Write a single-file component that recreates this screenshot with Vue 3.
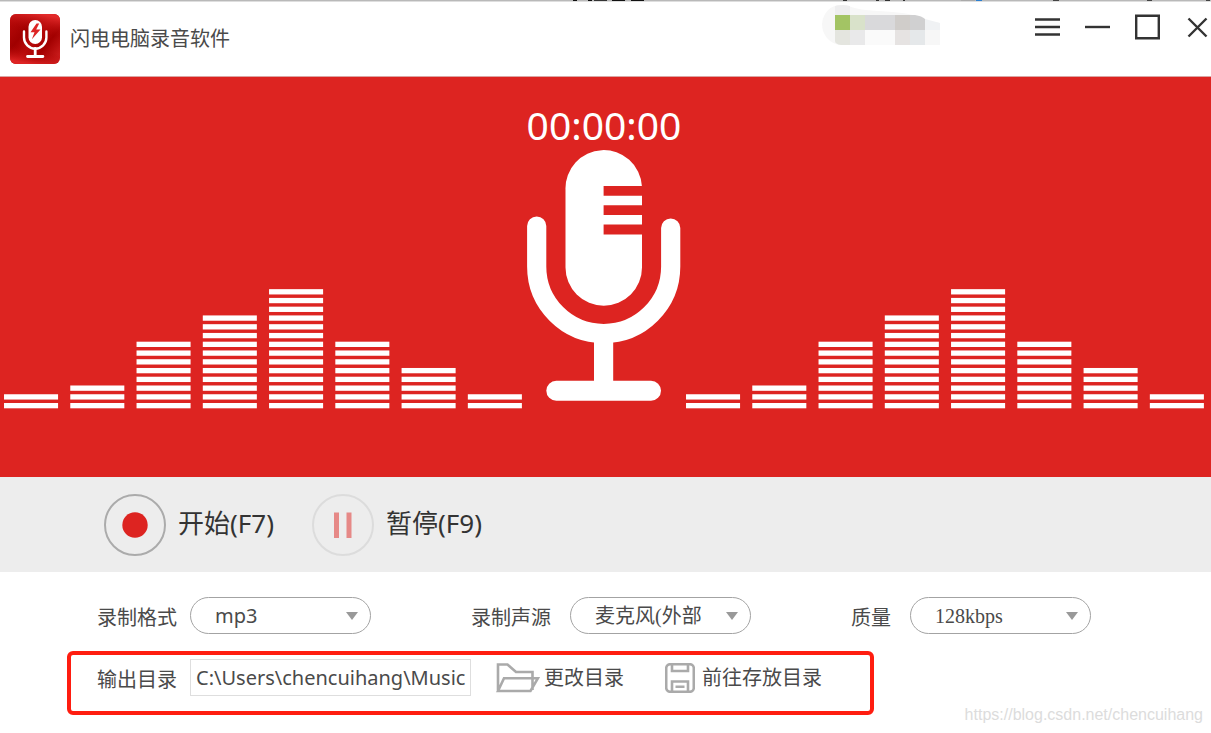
<script setup>
import { ref } from 'vue'

const format = ref('mp3')
const source = ref('mic')
const quality = ref('128')
const folder = ref('C:\\Users\\chencuihang\\Music')

const levels = [2, 3, 8, 11, 14, 8, 5, 2]
const stripes = levels.flatMap((count, col) =>
  Array.from({ length: count }, (_, row) => ({
    id: `${col}-${row}`,
    x: col * 66.2,
    y: 113.9 - row * 8.75
  }))
)

const sliver = [
  [573, 4, '#111'], [588, 4, '#111'], [594, 13, '#333'], [612, 13, '#111'], [631, 13, '#111'],
  [843, 4, '#333'], [876, 3, '#333'], [885, 5, '#333'], [903, 2, '#333'], [961, 14, '#aaa'],
  [976, 6, '#2b7fd0'], [1053, 6, '#444'], [1147, 5, '#444'], [1206, 4, '#444']
]
</script>

<template>
  <div class="app">
    <svg class="sliver" height="2" aria-hidden="true">
      <rect width="100%" height="1" fill="#b9b9b9" />
      <rect y="1" width="100%" height="1" fill="#dedede" />
      <rect v-for="s in sliver" :key="s[0]" :x="s[0]" :width="s[1]" height="1" :fill="s[2]" />
    </svg>

    <header class="titlebar">
      <svg class="logo" viewBox="0 0 50 50" aria-hidden="true">
        <defs>
          <linearGradient id="logoFill" x1="0" y1="0.1" x2="1" y2="0.9">
            <stop offset="0" stop-color="#b80a0a" />
            <stop offset="0.3" stop-color="#a00000" />
            <stop offset="0.5" stop-color="#b80a0a" />
            <stop offset="0.7" stop-color="#a20000" />
            <stop offset="1" stop-color="#d02020" />
          </linearGradient>
          <linearGradient id="logoShine" x1="0.6" y1="0" x2="0.4" y2="1">
            <stop offset="0" stop-color="#e22a2a" />
            <stop offset="0.4" stop-color="#a80000" stop-opacity="0" />
            <stop offset="0.7" stop-color="#a80000" stop-opacity="0" />
            <stop offset="1" stop-color="#de2424" />
          </linearGradient>
        </defs>
        <rect width="50" height="50" rx="6" fill="url(#logoFill)" />
        <rect width="50" height="50" rx="6" fill="url(#logoShine)" />
        <rect x="18.500" y="6" width="13.500" height="24" rx="6.700" fill="#fff" />
        <path d="M26.500 9.500 20.500 18.200h4l-2.600 7 8.600-9.700h-4.300l3-6z" fill="#dd2424" />
        <path d="M14 17.500v6a11.200 11.200 0 0 0 22.400 0v-6" fill="none" stroke="#fff" stroke-width="2.400" stroke-linecap="round" />
        <path d="M25.200 34.500v7.500M17.500 42.500h15.400" fill="none" stroke="#fff" stroke-width="2.800" stroke-linecap="round" />
      </svg>
      <h1 class="title">闪电电脑录音软件</h1>

      <svg class="account" viewBox="0 0 118 46" aria-hidden="true">
        <path d="M0 19C1 8 8 0 19 0c8 0 13 4 25 5 22 2 43 2 56 8 6 3 12 4 18 5v22H18C8 39 0 30 0 19z" fill="#f7f7f7" />
        <path d="M13 1q8-2 15 0v9H13z" fill="#eeeeef" />
        <path d="M13 10h15v15H13z" fill="#a3c464" />
        <path d="M28 10h15v15H28z" fill="#d9e2ca" />
        <path d="M43 10h30v15H43z" fill="#d9d9db" />
        <path d="M73 10h15v15H73z" fill="#d0cdca" />
        <path d="M88 10h5q7 1 10 4v11H88z" fill="#d0d0d1" />
        <path d="M103 14l15 4v7h-15z" fill="#f0f2f4" />
        <path d="M13 25h15v15h-9q-6-1-6-4z" fill="#e4e5df" />
        <path d="M28 25h15v15H28z" fill="#e9e9ea" />
        <path d="M43 25h30v15H43z" fill="#fafafa" />
        <path d="M73 25h15v15H73z" fill="#e6e3e2" />
        <path d="M88 25h15v15H88z" fill="#e5e8ea" />
      </svg>

      <nav class="window-buttons">
        <button type="button" aria-label="菜单">
          <svg viewBox="0 0 26 26"><path d="M0 5.500h25M0 13h25M0 20.500h25" /></svg>
        </button>
        <button type="button" aria-label="最小化">
          <svg viewBox="0 0 26 26"><path d="M0 13h25" /></svg>
        </button>
        <button type="button" aria-label="最大化">
          <svg viewBox="0 0 26 26"><path d="M1.200 1.700h22.600v22.600H1.200z" /></svg>
        </button>
        <button type="button" aria-label="关闭">
          <svg viewBox="0 0 26 26"><path d="M3.500 4.500l18 18M21.500 4.500l-18 18" /></svg>
        </button>
      </nav>
    </header>

    <main>
      <section class="stage">
        <div class="timer">00:00:00</div>
        <div class="scene">
          <svg class="wave" viewBox="0 0 518 120" aria-hidden="true">
            <rect v-for="s in stripes" :key="s.id" :x="s.x" :y="s.y" width="54" height="5.300" />
          </svg>
          <svg class="mic" viewBox="1 0 153 258" aria-hidden="true">
            <path d="M38.500 38.800a38.250 38.250 0 0 1 76.400-3.800H76.600v9.800H115v9.500H76.600v9.800H115v9.500H76.600v9.800H115v33a38.200 38.200 0 0 1-76.500 0z" />
            <path class="cradle" d="M9.700 75v40.500a67 67 0 0 0 134 0V77" />
            <path d="M67 185h19.200v50H67z" />
            <rect x="19.300" y="229.700" width="114.700" height="20" rx="10" />
          </svg>
          <svg class="wave" viewBox="0 0 518 120" aria-hidden="true">
            <rect v-for="s in stripes" :key="s.id" :x="s.x" :y="s.y" width="54" height="5.300" />
          </svg>
        </div>
      </section>

      <section class="controls">
        <button type="button" class="control">
          <svg viewBox="0 0 62 62" aria-hidden="true">
            <circle cx="31" cy="31" r="30" fill="none" stroke="#ababab" stroke-width="2" />
            <circle cx="31" cy="31" r="12.700" fill="#dd2421" />
          </svg>
          <span>开始(F7)</span>
        </button>
        <button type="button" class="control">
          <svg viewBox="0 0 62 62" aria-hidden="true">
            <circle cx="31" cy="31" r="30" fill="none" stroke="#dcdcdc" stroke-width="2" />
            <path d="M22 18.500h5v25.500h-5zM34.500 18.500h5v25.500h-5z" fill="#e68987" />
          </svg>
          <span>暂停(F9)</span>
        </button>
      </section>

      <section class="settings">
        <div class="fields">
          <div class="field first">
            <label for="format">录制格式</label>
            <div class="picker">
              <select id="format" v-model="format">
                <option value="mp3">mp3</option>
                <option value="wav">wav</option>
              </select>
              <svg viewBox="0 0 12 8" aria-hidden="true"><path d="M0 0h12L6 8z" /></svg>
            </div>
          </div>
          <div class="field">
            <label for="source">录制声源</label>
            <div class="picker">
              <select id="source" v-model="source" class="song">
                <option value="mic">麦克风(外部麦克风)</option>
              </select>
              <svg viewBox="0 0 12 8" aria-hidden="true"><path d="M0 0h12L6 8z" /></svg>
            </div>
          </div>
          <div class="field">
            <label for="quality">质量</label>
            <div class="picker">
              <select id="quality" v-model="quality" class="song">
                <option value="128">128kbps</option>
                <option value="320">320kbps</option>
              </select>
              <svg viewBox="0 0 12 8" aria-hidden="true"><path d="M0 0h12L6 8z" /></svg>
            </div>
          </div>
        </div>

        <div class="output">
          <label for="folder">输出目录</label>
          <input id="folder" v-model="folder" type="text" />
          <button type="button" class="action change">
            <svg class="folder" viewBox="0 0 44 30" aria-hidden="true">
              <path d="M2 28V1.500h9.500l8.500 7.500h16.500v6.500M2 28l6-12.800h34L34.500 28zM36.500 15v12" />
            </svg>
            <span>更改目录</span>
          </button>
          <button type="button" class="action open">
            <svg class="disk" viewBox="0 0 30 30" aria-hidden="true">
              <rect x="1.200" y="1.200" width="27.600" height="27.600" rx="4" />
              <path d="M7 1.500V8h16V1.500M7 28.500V18.500h16v10M10.500 23.700h9" />
            </svg>
            <span>前往存放目录</span>
          </button>
        </div>
      </section>
    </main>

    <div class="watermark">https://blog.csdn.net/chencuihang</div>
  </div>
</template>

<style>
body {
  margin: 0;
  background: #fff;
}
</style>

<style scoped>
.app {
  position: relative;
  min-height: 100vh;
  display: flex;
  flex-direction: column;
  overflow: hidden;
  font-family: "Noto Sans", "Noto Sans CJK SC", sans-serif;
  font-size: 20px;
  line-height: 28px;
  color: #4a4a4a;
}

svg {
  display: block;
  flex: none;
}

button,
input,
select {
  box-sizing: border-box;
  margin: 0;
  padding: 0;
  border: 0;
  background: none;
  font: inherit;
  color: inherit;
}

.sliver {
  width: 100%;
}

.titlebar {
  display: flex;
  align-items: center;
  height: 74px;
  padding-left: 10px;
  border-bottom: 1px solid #dba5a3;
}

.logo {
  width: 50px;
  height: 50px;
}

.title {
  margin: 0 auto 0 10px;
  font-size: 20px;
  font-weight: 400;
  line-height: 30px;
}

.account {
  align-self: flex-start;
  width: 118px;
  height: 46px;
  margin-top: 3px;
}

.window-buttons {
  align-self: flex-start;
  display: flex;
  gap: 24px;
  margin: 12px 0 0 95px;
}

.window-buttons svg {
  width: 26px;
  height: 26px;
  fill: none;
  stroke: #333;
  stroke-width: 2.4;
}

.stage {
  box-sizing: border-box;
  padding: 21px 7px 68px 4px;
  background: #dd2421;
  color: #fff;
}

.timer {
  text-align: center;
  font-size: 39px;
  line-height: 53px;
}

.scene {
  display: grid;
  grid-template-columns: 1fr 153px 1fr;
  column-gap: 5px;
  align-items: end;
}

.scene svg {
  width: 100%;
  fill: #fff;
  overflow: visible;
}

.mic .cradle {
  fill: none;
  stroke: #fff;
  stroke-width: 19.2;
  stroke-linecap: round;
}

.controls {
  display: flex;
  align-items: center;
  gap: 38px;
  height: 95px;
  padding-left: 104px;
  background: #ededed;
}

.control {
  display: flex;
  align-items: center;
  gap: 12px;
  font-size: 26px;
  line-height: 36px;
  color: #333;
}

.control span {
  padding-bottom: 3px;
}

.control svg {
  width: 62px;
  height: 62px;
}

.settings {
  padding: 25px 0 18px 67px;
}

.fields {
  display: flex;
  gap: 100px;
  padding-left: 30px;
}

.field {
  display: flex;
  align-items: center;
  gap: 19px;
}

.field.first {
  gap: 13px;
}

label {
  padding-top: 5px;
  white-space: nowrap;
}

.picker {
  position: relative;
  width: 181px;
}

.picker select {
  display: block;
  width: 100%;
  height: 37px;
  padding: 0 48px 0 24px;
  border: 1px solid #a3a3a3;
  border-radius: 19px;
  appearance: none;
}

.picker select.song {
  font-family: "Liberation Serif", "Noto Sans CJK SC", serif;
}

.picker svg {
  position: absolute;
  top: 15px;
  right: 13px;
  width: 12px;
  height: 8px;
  fill: #999;
  pointer-events: none;
}

.output {
  display: flex;
  align-items: center;
  width: fit-content;
  box-sizing: border-box;
  margin-top: 17px;
  padding: 4px 48px 15px 26px;
  border: 4px solid #ff1d10;
  border-radius: 6px;
}

.output input {
  width: 281px;
  height: 37px;
  margin-left: 13px;
  padding: 0 0 0 5px;
  border: 1px solid #dedede;
}

.action {
  display: flex;
  align-items: center;
}

.action svg {
  fill: none;
  stroke: #aaa;
  stroke-width: 2.6;
}

.change {
  gap: 4px;
  margin-left: 25px;
}

.open {
  gap: 7px;
  margin-left: 41px;
}

.folder {
  width: 44px;
  height: 30px;
}

.disk {
  width: 30px;
  height: 30px;
}

.watermark {
  position: absolute;
  right: 8px;
  bottom: 8px;
  font-family: "Liberation Sans", sans-serif;
  font-size: 16px;
  line-height: 20px;
  color: #dcdcdc;
}
</style>
